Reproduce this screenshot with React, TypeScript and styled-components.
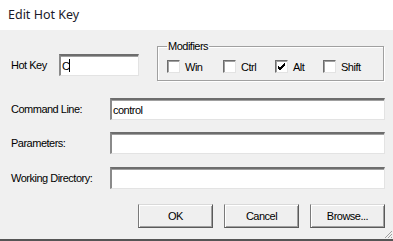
import React from "react";
import styled, { createGlobalStyle } from "styled-components";

const Global = createGlobalStyle`
  html, body { margin: 0; padding: 0; background: #f0f0f0; }
  * { box-sizing: border-box; }
`;

const Window = styled.div`
  position: relative;
  width: 393px;
  height: 241px;
  display: flex;
  flex-direction: column;
  font-family: "Liberation Sans", Arial, sans-serif;
  font-size: 11px;
  letter-spacing: -0.5px;
  color: #000;
  overflow: hidden;
`;

const TitleBar = styled.div`
  height: 30px;
  background: #fff;
  display: flex;
  align-items: center;
  padding-left: 8px;
  padding-bottom: 1px;
  font-family: "Noto Sans", "Open Sans", sans-serif;
  font-size: 12.5px;
  letter-spacing: 0;
  color: #1a1a2a;
`;

const Body = styled.div`
  flex: 1;
  background: #f0f0f0;
  border-bottom: 2px solid #555;
  padding: 0 8px 0 11px;
  display: flex;
  flex-direction: column;
`;

const TopRow = styled.div`
  display: flex;
  align-items: flex-start;
  height: 51px;
  padding-top: 10px;
`;

const HotKeyArea = styled.div`
  display: flex;
  align-items: center;
  margin-top: 14px;
  gap: 11px;
  white-space: nowrap;
`;

const HotKeyLabel = styled.span`
  width: 37px;
  flex: none;
`;

const Field = styled.div<{ $w?: number }>`
  height: 22px;
  width: ${(p) => (p.$w ? `${p.$w}px` : "auto")};
  flex: ${(p) => (p.$w ? "none" : "1")};
  background: #fff;
  border-style: solid;
  border-width: 2px 1px 1px 2px;
  border-color: #6d6d6d #e3e3e3 #e3e3e3 #8a8a8a;
  box-shadow: inset 0 1px 0 #a0a0a0;
  display: flex;
  align-items: center;
  padding: 0 2px 0 1px;
`;

const Caret = styled.span`
  display: inline-block;
  width: 1px;
  height: 13px;
  background: #000;
`;

const Group = styled.fieldset`
  margin: 0 0 0 18px;
  padding: 8px 0 0 9px;
  width: 227px;
  height: 41px;
  border: 1px solid #a0a0a0;
  box-shadow: inset 1px 1px 0 #fff, 1px 1px 0 #fff;
  display: flex;
  align-items: flex-start;
`;

const Legend = styled.legend`
  padding: 0 1px;
  margin-left: 0;
  font-size: 11px;
  line-height: 12px;
`;

const CheckItem = styled.label<{ $w: number }>`
  display: flex;
  align-items: center;
  gap: 5px;
  width: ${(p) => p.$w}px;
  flex: none;
  height: 13px;
`;

const Box = styled.span`
  width: 13px;
  height: 13px;
  background: #fff;
  border-style: solid;
  border-width: 1px;
  border-color: #6d6d6d #e3e3e3 #e3e3e3 #6d6d6d;
  box-shadow: inset 1px 1px 0 #a0a0a0;
  display: flex;
  align-items: center;
  justify-content: center;
`;

const FormRow = styled.div<{ $mt: number }>`
  display: flex;
  align-items: center;
  margin-top: ${(p) => p.$mt}px;
`;

const Label = styled.span`
  width: 99px;
  flex: none;
`;

const ButtonRow = styled.div`
  display: flex;
  justify-content: flex-end;
  gap: 11px;
  margin-top: 15px;
`;

const Button = styled.button`
  width: 75px;
  height: 24px;
  font-family: "Liberation Sans", Arial, sans-serif;
  font-size: 11px;
  letter-spacing: -0.5px;
  color: #000;
  background: #efefef;
  border-style: solid;
  border-width: 1px;
  border-color: #d9d9d9 #5a5a5a #5a5a5a #7a7a7a;
  box-shadow: inset 1px 1px 0 #fff, inset -1px -1px 0 #a0a0a0;
  padding: 0;
`;

const Grip = styled.svg`
  position: absolute;
  right: 0;
  bottom: 2px;
`;

const Check = () => (
  <svg width="9" height="9" viewBox="0 0 9 9">
    <path d="M1 4 L3 6 L8 1 M1 5 L3 7 L8 2 M1 6 L3 8 L8 3" stroke="#000" strokeWidth="1" fill="none" />
  </svg>
);

const mods: { name: string; w: number; on?: boolean }[] = [
  { name: "Win", w: 56 },
  { name: "Ctrl", w: 52 },
  { name: "Alt", w: 48, on: true },
  { name: "Shift", w: 50 },
];

export default function App() {
  return (
    <Window>
      <Global />
      <TitleBar>Edit Hot Key</TitleBar>
      <Body>
        <TopRow>
          <HotKeyArea>
            <HotKeyLabel>Hot Key</HotKeyLabel>
            <Field $w={80}>
              <span>C</span>
              <Caret />
            </Field>
          </HotKeyArea>
          <Group>
            <Legend>Modifiers</Legend>
            {mods.map((m) => (
              <CheckItem key={m.name} $w={m.w}>
                <Box>{m.on && <Check />}</Box>
                <span>{m.name}</span>
              </CheckItem>
            ))}
          </Group>
        </TopRow>
        <FormRow $mt={17}>
          <Label>Command Line:</Label>
          <Field>control</Field>
        </FormRow>
        <FormRow $mt={12}>
          <Label>Parameters:</Label>
          <Field />
        </FormRow>
        <FormRow $mt={13}>
          <Label>Working Directory:</Label>
          <Field />
        </FormRow>
        <ButtonRow>
          <Button>OK</Button>
          <Button>Cancel</Button>
          <Button>Browse...</Button>
        </ButtonRow>
      </Body>
      <Grip width="9" height="9" viewBox="0 0 9 9">
        <path d="M8 1 L1 8 M8 4 L4 8 M8 7 L7 8" stroke="#a0a0a0" strokeWidth="1" />
      </Grip>
    </Window>
  );
}
